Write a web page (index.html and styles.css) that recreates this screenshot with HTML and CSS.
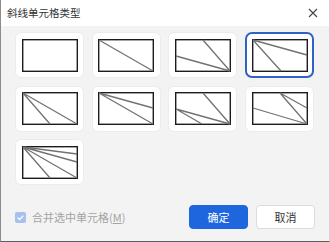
FILE: index.html
```html
<!DOCTYPE html>
<html lang="zh-CN">
<head>
<meta charset="utf-8">
<title>斜线单元格类型</title>
<link rel="stylesheet" href="styles.css">
</head>
<body>
<div class="dialog">
  <div class="titlebar">
    <span class="title">斜线单元格类型</span>
    <svg class="close" width="10" height="10" viewBox="0 0 10 10"><path d="M1 1L9 9M9 1L1 9" stroke="#444" stroke-width="1.1" fill="none"/></svg>
  </div>
  <div class="content">
    <div class="grid">
      <div class="card"><svg class="cell" viewBox="0 0 56 33"><rect x="0.7" y="0.7" width="54.6" height="31.6"/></svg></div>
      <div class="card"><svg class="cell" viewBox="0 0 56 33"><rect x="0.7" y="0.7" width="54.6" height="31.6"/><path d="M1 1L55 32"/></svg></div>
      <div class="card"><svg class="cell" viewBox="0 0 56 33"><rect x="0.7" y="0.7" width="54.6" height="31.6"/><path d="M28 1L55 32M1 17L55 32"/></svg></div>
      <div class="card selected"><svg class="cell" viewBox="0 0 56 33"><rect x="0.7" y="0.7" width="54.6" height="31.6"/><path d="M1 1L55 16M1 1L29 32"/></svg></div>
      <div class="card"><svg class="cell" viewBox="0 0 56 33"><rect x="0.7" y="0.7" width="54.6" height="31.6"/><path d="M1 1L55 32M1 1L28 32"/></svg></div>
      <div class="card"><svg class="cell" viewBox="0 0 56 33"><rect x="0.7" y="0.7" width="54.6" height="31.6"/><path d="M1 1L55 32M1 1L55 16"/></svg></div>
      <div class="card"><svg class="cell" viewBox="0 0 56 33"><rect x="0.7" y="0.7" width="54.6" height="31.6"/><path d="M28 1L55 32M1 17L55 32M1 17L27 32"/></svg></div>
      <div class="card"><svg class="cell" viewBox="0 0 56 33"><rect x="0.7" y="0.7" width="54.6" height="31.6"/><path d="M28 1L55 32M28 1L55 16M1 16L55 32"/></svg></div>
      <div class="card"><svg class="cell" viewBox="0 0 56 33"><rect x="0.7" y="0.7" width="54.6" height="31.6"/><path d="M1 1L28 32M1 1L55 32M1 1L55 16M1 1L55 8"/></svg></div>
    </div>
    <div class="footer">
      <label class="check">
        <span class="box"><svg width="11" height="11" viewBox="0 0 11 11"><path d="M2.6 5.6L4.6 7.5L8.4 3.6" stroke="#fff" stroke-width="1.3" fill="none"/></svg></span>
        <span class="check-text">合并选中单元格(<u>M</u>)</span>
      </label>
      <div class="buttons">
        <button class="btn primary">确定</button>
        <button class="btn">取消</button>
      </div>
    </div>
  </div>
</div>
</body>
</html>
```
FILE: styles.css
```css
html, body {
  margin: 0;
  padding: 0;
}
body {
  width: 330px;
  height: 242px;
  overflow: hidden;
  font-family: "Noto Sans CJK SC", "Noto Sans", sans-serif;
}
.dialog {
  width: 330px;
  height: 242px;
  box-sizing: border-box;
  display: flex;
  flex-direction: column;
  background: #f3f3f3;
  border-left: 1px solid #8c8c8c;
  border-right: 1px solid #d4d4d4;
  border-bottom: 1px solid #5e5e5e;
}
.titlebar {
  height: 26px;
  flex: none;
  background: #ffffff;
  display: flex;
  align-items: center;
  justify-content: space-between;
  padding: 0 11px 0 6px;
}
.title {
  font-size: 10.5px;
  color: #333;
  line-height: 1;
}
.close {
  display: block;
}
.content {
  flex: 1;
  display: flex;
  flex-direction: column;
  padding: 6px 14px 12px 14px;
}
.grid {
  display: grid;
  grid-template-columns: repeat(4, 69px);
  grid-auto-rows: 46px;
  column-gap: 7.7px;
  row-gap: 7.5px;
}
.card {
  background: #ffffff;
  border-radius: 6px;
  box-sizing: border-box;
  border: 1px solid #ececec;
  display: flex;
  align-items: center;
  justify-content: center;
}
.card.selected {
  border: 2px solid #2f62c4;
  border-radius: 7px;
}
.cell {
  width: 56px;
  height: 33px;
  display: block;
}
.cell rect {
  fill: #fff;
  stroke: #1c1c1c;
  stroke-width: 1.4;
}
.cell path {
  stroke: #727272;
  stroke-width: 1.3;
  fill: none;
}
.footer {
  margin-top: auto;
  display: flex;
  align-items: center;
  justify-content: space-between;
}
.check {
  display: flex;
  align-items: center;
  gap: 6px;
  padding-top: 0;
}
.box {
  width: 11px;
  height: 11px;
  border-radius: 2px;
  background: #a8c1ec;
  display: block;
}
.box svg {
  display: block;
}
.check-text {
  font-size: 11px;
  color: #a3a3a3;
  line-height: 1;
}
.buttons {
  display: flex;
  gap: 8px;
}
.btn {
  width: 59px;
  height: 24px;
  border-radius: 4px;
  border: 1px solid #dcdcdc;
  background: #ffffff;
  color: #333;
  font-family: "Noto Sans CJK SC", "Noto Sans", sans-serif;
  font-size: 11px;
  padding: 0;
  line-height: 1;
}
.btn.primary {
  background: #1e66de;
  border-color: #1e66de;
  color: #ffffff;
}
```
